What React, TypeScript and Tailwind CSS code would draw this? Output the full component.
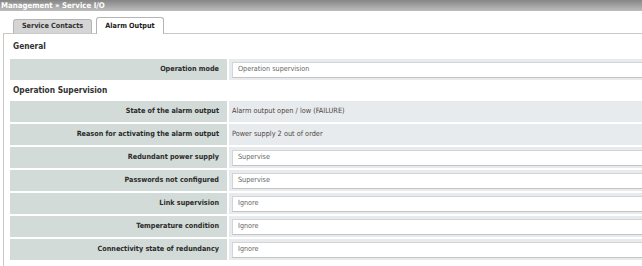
type Row = {
  label: string;
  value: string;
  input?: boolean;
};

const supervisionRows: Row[] = [
  { label: 'State of the alarm output', value: 'Alarm output open / low (FAILURE)' },
  { label: 'Reason for activating the alarm output', value: 'Power supply 2 out of order' },
  { label: 'Redundant power supply', value: 'Supervise', input: true },
  { label: 'Passwords not configured', value: 'Supervise', input: true },
  { label: 'Link supervision', value: 'Ignore', input: true },
  { label: 'Temperature condition', value: 'Ignore', input: true },
  { label: 'Connectivity state of redundancy', value: 'Ignore', input: true },
];

// Zeile mit Label links und Wert/Eingabefeld rechts
function FormRow({ label, value, input }: Row) {
  return (
    <div className="flex h-[21px] gap-[2px]">
      <div className="flex w-[217px] shrink-0 items-center justify-end bg-[#d3dbd9] pr-[8px] text-[7.2px] font-bold text-[#2b2b2b]">
        {label}
      </div>
      <div className="flex flex-1 items-center bg-[#e8ebee] pl-[3px]">
        {input ? (
          <div className="flex h-[16px] flex-1 items-center border border-[#d4d4d4] border-b-[#c4c4c4] bg-white pl-[5px] text-[7.2px] text-[#666]">
            {value}
          </div>
        ) : (
          <span className="text-[7.3px] text-[#4f4640]">{value}</span>
        )}
      </div>
    </div>
  );
}

export default function App() {
  return (
    <div className="h-[266px] w-[642px] overflow-hidden bg-white font-['DejaVu_Sans_Condensed','DejaVu_Sans',sans-serif]">
      {/* Breadcrumb-Leiste */}
      <div className="flex h-[11px] items-center bg-gradient-to-b from-[#868686] to-[#bdbdbd] pl-[1px] text-[7.8px] font-bold text-white">
        Management » Service I/O
      </div>

      {/* Tabs */}
      <div className="flex h-[22px] items-end gap-[4px] pl-[13px]">
        <div className="flex h-[14px] w-[79px] items-center justify-center rounded-t-[3px] border border-b-0 border-[#b4b4b4] bg-[#d5d5d5] text-[7.2px] font-bold text-[#333]">
          Service Contacts
        </div>
        <div className="relative z-10 -mb-px flex h-[17px] w-[68px] items-center justify-center rounded-t-[3px] border border-b-0 border-[#b4b4b4] bg-white text-[7.2px] font-bold text-[#222]">
          Alarm Output
        </div>
      </div>

      {/* Inhalt */}
      <div className="ml-[3px] w-[720px] border-l border-t border-[#c8c8c8] pl-[6px] pb-[8px]">
        <div className="flex h-[25px] items-center pl-[3px] text-[8.3px] font-bold text-[#333]">General</div>
        <FormRow label="Operation mode" value="Operation supervision" input />
        <div className="flex h-[21px] items-center pl-[3px] text-[8.3px] font-bold text-[#333]">
          Operation Supervision
        </div>
        <div className="flex flex-col gap-[2px]">
          {supervisionRows.map((row) => (
            <FormRow key={row.label} {...row} />
          ))}
        </div>
      </div>
    </div>
  );
}
